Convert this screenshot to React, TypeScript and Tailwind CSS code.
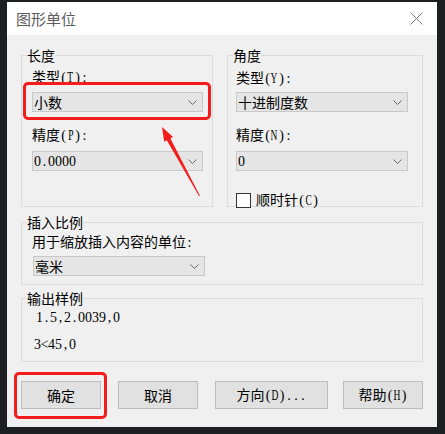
import type { ReactNode } from 'react';

// 中文用 Noto Sans CJK，拉丁字符按宋体半角（7px 一格）排
function Txt({ s }: { s: string }) {
  const parts = s.split(/([\u4e00-\u9fff]+)/);
  return (
    <>
      {parts.map((p, i) =>
        p === '' ? null : /[\u4e00-\u9fff]/.test(p) ? (
          <span key={i}>{p}</span>
        ) : (
          <span key={i} className="font-['Liberation_Serif',serif] text-[14px]">
            {p.split('').map((c, j) => (
              <span key={j} className="inline-flex w-[7px] justify-center">
                {/[A-Z]/.test(c) ? <span className="inline-block scale-x-[0.68]">{c}</span> : c}
              </span>
            ))}
          </span>
        )
      )}
    </>
  );
}

function Select({ value, width }: { value: string; width: string }) {
  return (
    <div
      className={`flex h-[20px] items-center justify-between border border-[#c9c9c9] bg-[#e5e5e5] pl-[1px] pr-[5px] ${width}`}
    >
      <span className="leading-[16px]">
        <Txt s={value} />
      </span>
      <svg width="9" height="5" viewBox="0 0 9 5" className="text-[#666]">
        <path d="M0.5 0.5 L4.5 4.5 L8.5 0.5" fill="none" stroke="currentColor" strokeWidth="1" />
      </svg>
    </div>
  );
}

function Group({ title, className, pad, children }: { title: string; className: string; pad: string; children: ReactNode }) {
  return (
    <fieldset className={`border border-[#dcdcdc] ${className}`}>
      <legend className="ml-[5px] text-[14px] leading-[16px]">{title}</legend>
      <div className={pad}>{children}</div>
    </fieldset>
  );
}

function Button({ label, width }: { label: string; width: string }) {
  return (
    <button className={`flex h-[28px] items-center justify-center border border-[#bdbdbd] bg-[#e1e1e1] text-[14px] leading-[16px] ${width}`}>
      <span>
        <Txt s={label} />
      </span>
    </button>
  );
}

export default function App() {
  return (
    <div className="relative h-[434px] w-[445px] overflow-hidden bg-[#1d1f22] pl-[7px] pt-[2px] font-['Noto_Sans_CJK_SC',sans-serif] text-[14px] text-black">
      <div className="flex h-[425px] w-[430px] flex-col">
        {/* 标题栏 */}
        <div className="flex h-[33px] items-center justify-between bg-white pl-[9px] pr-[14px]">
          <span className="text-[15px] leading-[18px] text-[#5c5c5c]">图形单位</span>
          <svg width="13" height="13" viewBox="0 0 13 13">
            <path d="M0.5 0.5 L12.5 12.5 M12.5 0.5 L0.5 12.5" stroke="#7a7a7a" strokeWidth="1" />
          </svg>
        </div>

        <div className="flex-1 bg-[#f0f0f0] px-[14px] pt-[12px]">
          <div className="flex gap-[14px]">
            <Group title="长度" className="h-[160px] w-[192px]" pad="pl-[10px]">
              <div className="mt-[5px] leading-[16px]">
                <Txt s="类型(T):" />
              </div>
              <div className="mt-[6px]">
                <Select value="小数" width="w-[171px]" />
              </div>
              <div className="mt-[14px] leading-[16px]">
                <Txt s="精度(P):" />
              </div>
              <div className="mt-[7px]">
                <Select value="0.0000" width="w-[171px]" />
              </div>
            </Group>

            <Group title="角度" className="h-[160px] w-[196px]" pad="pl-[8px]">
              <div className="mt-[6px] leading-[16px]">
                <Txt s="类型(Y):" />
              </div>
              <div className="mt-[5px]">
                <Select value="十进制度数" width="w-[172px]" />
              </div>
              <div className="mt-[14px] leading-[16px]">
                <Txt s="精度(N):" />
              </div>
              <div className="mt-[7px]">
                <Select value="0" width="w-[172px]" />
              </div>
              <div className="mt-[20px] flex items-center gap-[5px] leading-[16px]">
                <div className="h-[15px] w-[15px] border border-[#333] bg-white" />
                <span>
                  <Txt s="顺时针(C)" />
                </span>
              </div>
            </Group>
          </div>

          <Group title="插入比例" className="mt-[7px] h-[71px] w-[402px]" pad="pl-[10px]">
            <div className="mt-[3px] leading-[16px]">
              <Txt s="用于缩放插入内容的单位:" />
            </div>
            <div className="ml-[1px] mt-[5px]">
              <Select value="毫米" width="w-[172px]" />
            </div>
          </Group>

          <Group title="输出样例" className="mt-[5px] h-[72px] w-[402px]" pad="">
            <div className="mt-[2px] pl-[14px] leading-[16px]">
              <Txt s="1.5,2.0039,0" />
            </div>
            <div className="mt-[9px] pl-[12px] leading-[16px]">
              <Txt s="3<45,0" />
            </div>
          </Group>

          <div className="mt-[19px] flex">
            <Button label="确定" width="w-[80px]" />
            <div className="ml-[17px]">
              <Button label="取消" width="w-[80px]" />
            </div>
            <div className="ml-[17px]">
              <Button label="方向(D)..." width="w-[113px]" />
            </div>
            <div className="ml-[15px]">
              <Button label="帮助(H)" width="w-[80px]" />
            </div>
          </div>
        </div>
      </div>

      {/* 红色标注 */}
      <div className="absolute left-[23px] top-[82px] h-[38px] w-[188px] rounded-[5px] border-[3px] border-[#f51c1c]" />
      <div className="absolute left-[14px] top-[372px] h-[47px] w-[93px] rounded-[5px] border-[3px] border-[#f51c1c]" />
      <svg className="absolute left-0 top-0" width="445" height="434" viewBox="0 0 445 434">
        <polygon
          points="162,127 173,137 170.4,138.4 199.9,195.8 199.1,196.2 166.8,140.2 164.2,141.7"
          fill="#f51c1c"
        />
      </svg>
    </div>
  );
}
